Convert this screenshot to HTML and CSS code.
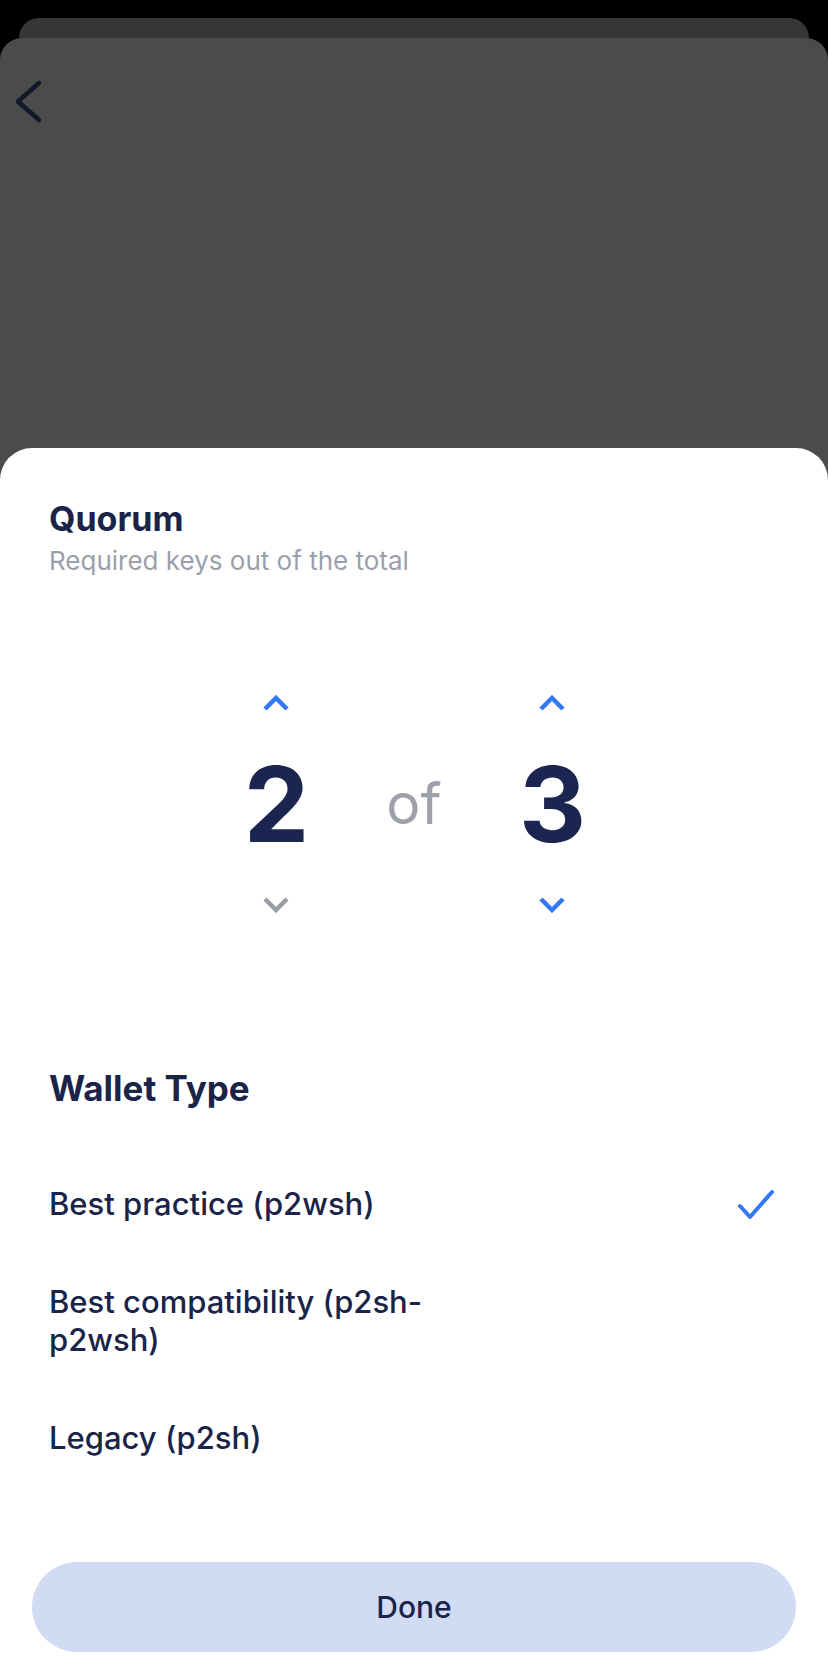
FILE: index.html
```html
<!DOCTYPE html>
<html lang="en">
<head>
<meta charset="utf-8">
<title>Quorum</title>
<link rel="stylesheet" href="styles.css">
</head>
<body>
<div class="back-card"></div>
<div class="front-card">
  <div class="nav">
    <svg class="back-icon" width="30" height="45" viewBox="0 0 30 45" aria-label="Back">
      <path d="M25 4 L4 22.5 L25 41" fill="none" stroke="#111829" stroke-width="4.5" stroke-linecap="round" stroke-linejoin="round"/>
    </svg>
  </div>
  <div class="sheet">
    <h1 class="title">Quorum</h1>
    <p class="subtitle">Required keys out of the total</p>

    <div class="picker">
      <svg class="chev chev-up active" width="28" height="16" viewBox="0 0 28 16"><path d="M3 14 L14 3 L25 14" fill="none" stroke-width="4.5"/></svg>
      <div class="spacer"></div>
      <svg class="chev chev-up active" width="28" height="16" viewBox="0 0 28 16"><path d="M3 14 L14 3 L25 14" fill="none" stroke-width="4.5"/></svg>

      <div class="num">2</div>
      <div class="of">of</div>
      <div class="num">3</div>

      <svg class="chev chev-down disabled" width="28" height="16" viewBox="0 0 28 16"><path d="M3 2 L14 13 L25 2" fill="none" stroke-width="4.5"/></svg>
      <div class="spacer"></div>
      <svg class="chev chev-down active" width="28" height="16" viewBox="0 0 28 16"><path d="M3 2 L14 13 L25 2" fill="none" stroke-width="4.5"/></svg>
    </div>

    <h2 class="section-title">Wallet Type</h2>
    <ul class="options">
      <li class="option selected">
        <span class="option-label">Best practice (p2wsh)</span>
        <svg class="check" width="40" height="33" viewBox="0 0 40 33"><path d="M4 18 L14 29 L36 4" fill="none" stroke="#3478f6" stroke-width="4" stroke-linecap="round" stroke-linejoin="round"/></svg>
      </li>
      <li class="option">
        <span class="option-label">Best compatibility (p2sh-p2wsh)</span>
      </li>
      <li class="option">
        <span class="option-label">Legacy (p2sh)</span>
      </li>
    </ul>

    <button class="done">Done</button>
  </div>
</div>
</body>
</html>
```

FILE: styles.css
```css
* {
  box-sizing: border-box;
}

html, body {
  margin: 0;
  padding: 0;
}

body {
  width: 828px;
  height: 1676px;
  overflow: hidden;
  background: #000;
  font-family: Inter, "Noto Sans", "Liberation Sans", sans-serif;
  color: #1a2449;
}

.back-card {
  height: 20px;
  margin: 18px 19px 0;
  background: #363636;
  border-radius: 20px 20px 0 0;
}

.front-card {
  height: 1638px;
  background: #4b4b4b;
  border-radius: 22px 22px 0 0;
  display: flex;
  flex-direction: column;
}

.nav {
  padding: 41px 0 0 14px;
}

.back-icon {
  display: block;
}

.sheet {
  margin-top: auto;
  background: #fff;
  border-radius: 32px 32px 0 0;
  padding: 51px 49px 24px;
  display: flex;
  flex-direction: column;
}

.title {
  margin: 0;
  font-size: 34px;
  line-height: 40px;
  font-weight: 700;
  color: #1a2449;
}

.subtitle {
  margin: 6px 0 0;
  font-size: 26px;
  line-height: 32px;
  font-weight: 400;
  color: #9b9fab;
}

.picker {
  margin-top: 118px;
  display: grid;
  grid-template-columns: repeat(3, 138px);
  grid-template-rows: 16px 152px 50px;
  justify-content: center;
  justify-items: center;
  align-items: start;
}

.chev {
  display: block;
}

.chev.active path {
  stroke: #3478f6;
}

.chev.disabled path {
  stroke: #9a9ca6;
}

.num {
  grid-row: 2;
  margin-top: 38px;
  font-size: 104px;
  line-height: 110px;
  font-weight: 700;
  color: #1b2650;
  letter-spacing: -1px;
}

.of {
  grid-row: 2;
  margin-top: 64px;
  font-size: 57px;
  line-height: 57px;
  font-weight: 400;
  color: #9ea1ab;
}

.chev-down {
  margin-top: 34px;
}

.section-title {
  margin: 155px 0 0;
  font-size: 35px;
  line-height: 40px;
  font-weight: 700;
  color: #1a2449;
}

.options {
  list-style: none;
  margin: 47px 0 0;
  padding: 0;
}

.option {
  display: flex;
  align-items: center;
  justify-content: space-between;
  padding: 30px 0 30px;
}

.option-label {
  max-width: 410px;
  font-size: 31px;
  line-height: 38px;
  font-weight: 500;
  color: #1a2449;
}

.check {
  display: block;
  margin-right: 3px;
}

.done {
  margin: 75px -17px 0;
  height: 90px;
  border: 0;
  border-radius: 45px;
  background: #d1dbf3;
  font-family: inherit;
  font-size: 30px;
  font-weight: 500;
  color: #1a2449;
}
```
